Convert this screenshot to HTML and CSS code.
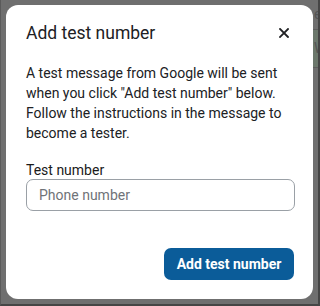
FILE: index.html
```html
<!DOCTYPE html>
<html>
<head>
<meta charset="utf-8">
<title>Add test number</title>
<link rel="stylesheet" href="styles.css">
</head>
<body>
<div class="frame">
  <div class="dialog">
    <div class="dialog-head">
      <h2 class="dialog-title">Add test number</h2>
      <span class="dialog-close">
        <svg width="10" height="10" viewBox="0 0 10 10"><path d="M1 1L9 9M9 1L1 9" stroke="#202124" stroke-width="1.8" stroke-linecap="square"/></svg>
      </span>
    </div>
    <p class="dialog-text">A test message from Google will be sent when you click "Add test number" below. Follow the instructions in the message to become a tester.</p>
    <label class="field-label" for="phone">Test number</label>
    <input class="field-input" id="phone" type="text" placeholder="Phone number">
    <div class="dialog-actions">
      <button class="btn-primary">Add test number</button>
    </div>
  </div>
  <div class="behind">
    <div class="behind-row">e</div>
    <div class="behind-row behind-green">W</div>
    <div class="behind-row"></div>
  </div>
</div>
</body>
</html>
```
FILE: styles.css
```css
*{margin:0;padding:0;box-sizing:border-box;}
body{width:320px;height:306px;background:#6f6f6f;font-family:Roboto,"Liberation Sans",sans-serif;color:#202124;}
.frame{width:320px;height:306px;display:flex;align-items:flex-start;padding:5px 0 0 5px;border-right:2px solid #454545;border-bottom:2px solid #454545;border-left:1px solid #5a5a5a;}
.dialog{width:307px;height:294px;background:#fff;border-radius:12px;padding:20px 20px 0 20px;display:flex;flex-direction:column;flex-shrink:0;}
.dialog-head{display:flex;justify-content:space-between;align-items:center;height:16px;margin-bottom:22px;}
.dialog-title{font-size:17.5px;font-weight:400;line-height:24px;color:#202124;}
.dialog-close{display:flex;margin-right:4px;}
.dialog-text{font-size:14px;line-height:20px;color:#202124;margin-bottom:17px;}
.field-label{font-size:14px;line-height:20px;font-weight:400;color:#1a1a1a;margin-bottom:-1px;}
.field-input{width:269px;height:32px;border:1px solid #9aa0a6;border-radius:7px;padding:0 12px;font-family:inherit;font-size:14px;color:#202124;outline:none;}
.field-input::placeholder{color:#6f7378;}
.dialog-actions{display:flex;justify-content:flex-end;margin-top:37px;}
.btn-primary{width:130px;height:32px;border:none;border-radius:7px;background:#0b5c99;color:#fff;font-family:inherit;font-size:14px;font-weight:700;margin-right:-1px;}
.behind{flex:1;height:80px;margin-top:-5px;overflow:hidden;}
.behind-row{height:30px;border-bottom:1px solid #5e5e5e;font-size:14px;line-height:28px;color:#555;padding-left:1px;}
.behind-green{height:38px;background:#6c786c;padding-top:4px;}
```
